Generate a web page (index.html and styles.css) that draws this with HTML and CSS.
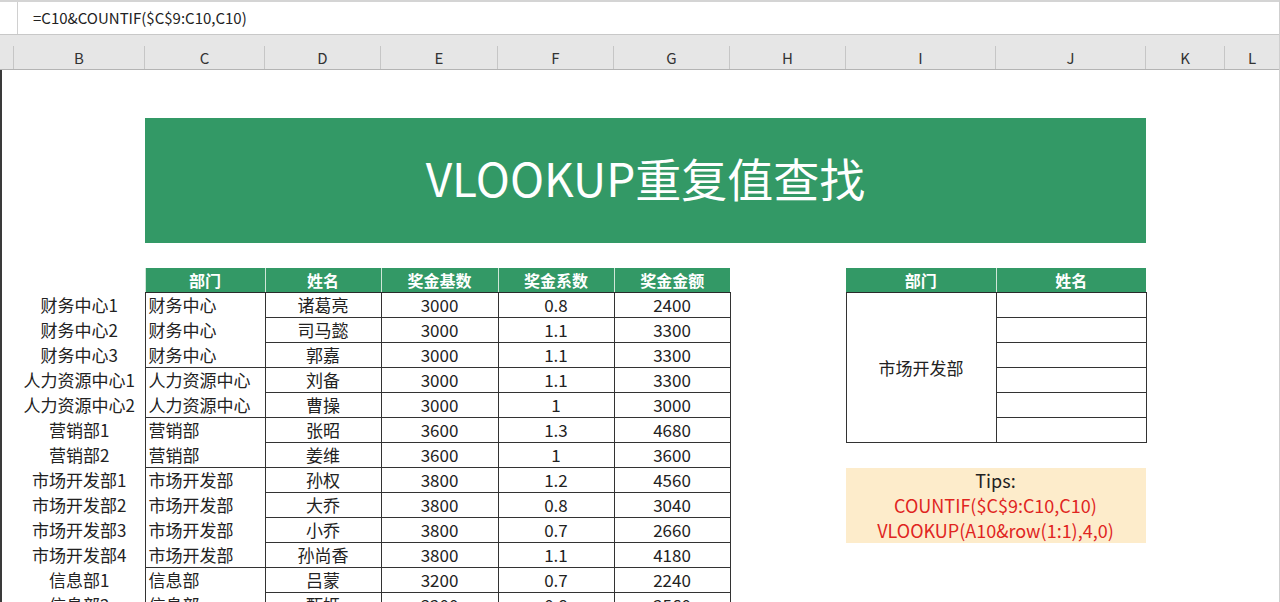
FILE: index.html
```html
<!DOCTYPE html>
<html>
	<head>
		<meta charset="UTF-8">
		<title>VLOOKUP重复值查找</title>
		<link rel="stylesheet" href="styles.css">
	</head>
	<body>
		<div class="fbar">
			<div class="fbar_gap"></div>
			<div class="fbar_text">=C10&amp;COUNTIF($C$9:C10,C10)</div>
		</div>
		<div class="heads">
			<div class="h_stub"></div>
			<div>B</div><div>C</div><div>D</div><div>E</div><div>F</div><div>G</div>
			<div>H</div><div>I</div><div>J</div><div>K</div><div>L</div>
		</div>
		<div class="sheet">
			<div class="title">VLOOKUP重复值查找</div>
			<div class="area">
				<table class="main">
					<colgroup>
						<col style="width:131px"><col style="width:120px"><col style="width:116px">
						<col style="width:117px"><col style="width:116px"><col style="width:116px">
					</colgroup>
					<tr class="thead">
						<td class="lbl"></td><th>部门</th><th>姓名</th><th>奖金基数</th><th>奖金系数</th><th>奖金金额</th>
					</tr>
					<tr class="grp"><td class="lbl">财务中心1</td><td class="dep">财务中心</td><td>诸葛亮</td><td>3000</td><td>0.8</td><td>2400</td></tr>
					<tr><td class="lbl">财务中心2</td><td class="dep">财务中心</td><td>司马懿</td><td>3000</td><td>1.1</td><td>3300</td></tr>
					<tr><td class="lbl">财务中心3</td><td class="dep">财务中心</td><td>郭嘉</td><td>3000</td><td>1.1</td><td>3300</td></tr>
					<tr class="grp"><td class="lbl">人力资源中心1</td><td class="dep">人力资源中心</td><td>刘备</td><td>3000</td><td>1.1</td><td>3300</td></tr>
					<tr><td class="lbl">人力资源中心2</td><td class="dep">人力资源中心</td><td>曹操</td><td>3000</td><td>1</td><td>3000</td></tr>
					<tr class="grp"><td class="lbl">营销部1</td><td class="dep">营销部</td><td>张昭</td><td>3600</td><td>1.3</td><td>4680</td></tr>
					<tr><td class="lbl">营销部2</td><td class="dep">营销部</td><td>姜维</td><td>3600</td><td>1</td><td>3600</td></tr>
					<tr class="grp"><td class="lbl">市场开发部1</td><td class="dep">市场开发部</td><td>孙权</td><td>3800</td><td>1.2</td><td>4560</td></tr>
					<tr><td class="lbl">市场开发部2</td><td class="dep">市场开发部</td><td>大乔</td><td>3800</td><td>0.8</td><td>3040</td></tr>
					<tr><td class="lbl">市场开发部3</td><td class="dep">市场开发部</td><td>小乔</td><td>3800</td><td>0.7</td><td>2660</td></tr>
					<tr><td class="lbl">市场开发部4</td><td class="dep">市场开发部</td><td>孙尚香</td><td>3800</td><td>1.1</td><td>4180</td></tr>
					<tr class="grp"><td class="lbl">信息部1</td><td class="dep">信息部</td><td>吕蒙</td><td>3200</td><td>0.7</td><td>2240</td></tr>
					<tr><td class="lbl">信息部2</td><td class="dep">信息部</td><td>甄姬</td><td>3200</td><td>0.8</td><td>2560</td></tr>
				</table>
				<div class="side">
					<table class="look">
						<colgroup><col style="width:150px"><col style="width:150px"></colgroup>
						<tr class="thead"><th>部门</th><th>姓名</th></tr>
						<tr><td rowspan="6" class="big">市场开发部</td><td></td></tr>
						<tr><td></td></tr>
						<tr><td></td></tr>
						<tr><td></td></tr>
						<tr><td></td></tr>
						<tr><td></td></tr>
					</table>
					<div class="tips">
						<div>Tips:</div>
						<div class="red">COUNTIF($C$9:C10,C10)</div>
						<div class="red">VLOOKUP(A10&amp;row(1:1),4,0)</div>
					</div>
				</div>
			</div>
		</div>
	</body>
</html>
```
FILE: styles.css
```css
html,body{
	margin: 0;
	padding: 0;
	background: #fff;
	font-family: "Noto Sans CJK SC", "Noto Sans", sans-serif;
	color: #222;
	overflow: hidden;
}
body{
	width: 1280px;
	height: 602px;
	border-right: 1px solid #cfcfcf;
	box-sizing: border-box;
}

/* formula bar */
.fbar{
	display: flex;
	height: 32px;
	border-top: 2px solid #d4d4d4;
	border-bottom: 1px solid #c8c8c8;
}
.fbar_gap{
	width: 17px;
	border-right: 1px solid #d0d0d0;
}
.fbar_text{
	padding-left: 15px;
	font-size: 15px;
	line-height: 32px;
	color: #222;
}

/* column letters */
.heads{
	display: grid;
	grid-template-columns: 14px 131px 120px 116px 117px 116px 116px 116px 150px 150px 79px 55px;
	background: #e6e6e6;
	padding-top: 11px;
	border-bottom: 1px solid #b4b4b4;
}
.heads div{
	height: 23px;
	line-height: 23px;
	text-align: center;
	font-size: 15px;
	color: #333;
	border-right: 1px solid #c6c6c6;
	box-sizing: border-box;
}
.heads .h_stub{ border-right: 1px solid #c6c6c6; }

/* sheet */
.sheet{
	border-left: 2px solid #3a3a3a;
	height: 600px;
	padding-top: 48px;
	padding-left: 143px;
	box-sizing: border-box;
}
.title{
	width: 1001px;
	height: 125px;
	box-sizing: border-box;
	padding-bottom: 6px;
	background: #339966;
	color: #fff;
	font-size: 46px;
	line-height: 119px;
	text-align: center;
}
.area{
	display: flex;
	margin-top: 25px;
	margin-left: -131px;
}

table{
	border-collapse: collapse;
	table-layout: fixed;
	font-size: 17px;
}
td,th{
	padding: 0;
	height: 24px;
	line-height: 24px;
	text-align: center;
	white-space: nowrap;
	overflow: hidden;
}
.thead th{
	background: #339966;
	color: #fff;
	font-weight: bold;
	font-size: 16px;
	border-left: 1px solid #cfe6d8;
	border-bottom: 1px solid #2a2a2a;
}
.main td{
	border: 1px solid #333;
}
.main td.lbl{
	border: none;
	border-right: 1px solid #333;
}
.main .thead td.lbl{ border-right: none; }
.main td.dep{
	text-align: left;
	padding-left: 3px;
	border-top: none;
	border-bottom: none;
}
.main tr.grp td.dep{ border-top: 1px solid #333; }

.side{
	margin-left: 115px;
}
.look td{
	border: 1px solid #333;
}
.look .thead th:first-child{ border-left: none; }
.big{ vertical-align: middle; }

.tips{
	margin-top: 25px;
	width: 300px;
	height: 75px;
	background: #fdeccb;
	text-align: center;
	font-size: 18px;
	line-height: 25px;
}
.red{ color: #e0251f; }
```
